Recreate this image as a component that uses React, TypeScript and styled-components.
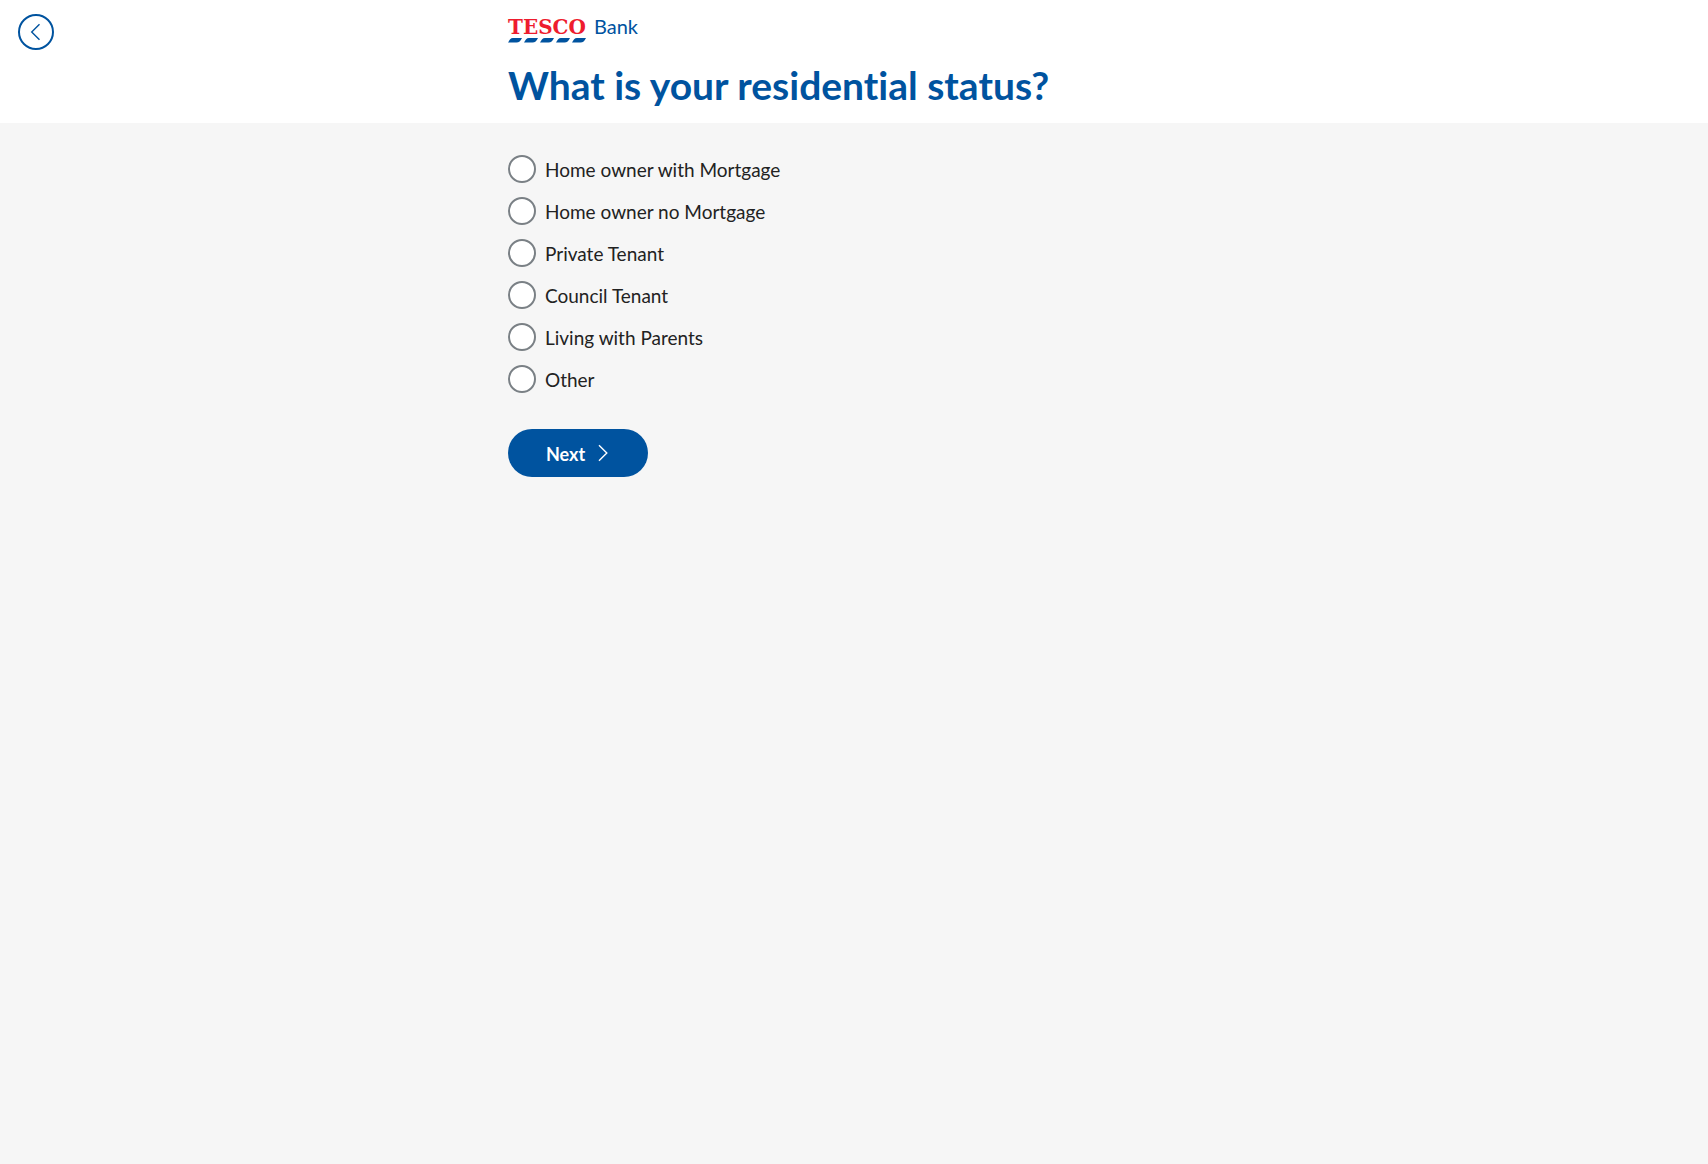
import { useState } from "react";
import type { FormEvent } from "react";
import styled, { createGlobalStyle } from "styled-components";

const brandBlue = "#00539f";
const brandRed = "#ee1c2e";

const GlobalStyle = createGlobalStyle`
  *, *::before, *::after {
    box-sizing: border-box;
  }
  body {
    margin: 0;
    min-height: 100vh;
    background: #f6f6f6;
    color: #222;
    font-family: Lato, "Liberation Sans", sans-serif;
    font-size: 19px;
    font-variant-ligatures: none;
    line-height: 28px;
  }
`;

const Header = styled.header`
  display: grid;
  grid-template-columns: minmax(60px, 1fr) minmax(0, 692px) minmax(18px, 1fr);
  padding: 14px 0;
  background: #fff;
`;

const BackButton = styled.button`
  display: flex;
  align-items: center;
  justify-content: center;
  width: 36px;
  height: 36px;
  margin-left: 18px;
  padding: 0;
  border: 2px solid ${brandBlue};
  border-radius: 50%;
  background: #fff;
  color: ${brandBlue};
  cursor: pointer;
`;

const Logo = styled.a`
  display: flex;
  align-items: flex-start;
  gap: 8px;
  width: fit-content;
  height: 28px;
  color: ${brandBlue};
  text-decoration: none;
`;

const Tesco = styled.span`
  display: flex;
  flex-direction: column;
  padding-top: 2px;
`;

const TescoName = styled.span`
  color: ${brandRed};
  font: bold 20px/22px "DejaVu Serif", serif;
`;

const BankName = styled.span`
  font-size: 20px;
  line-height: 24px;
`;

const Title = styled.h1`
  margin: 19px 0 0;
  color: ${brandBlue};
  font-size: 39px;
  font-weight: 700;
  line-height: 48px;
`;

const Main = styled.main`
  display: grid;
  grid-template-columns: minmax(18px, 1fr) minmax(0, 692px) minmax(18px, 1fr);
  padding: 32px 0;
`;

const Form = styled.form`
  grid-column: 2;
`;

const Options = styled.fieldset`
  display: flex;
  flex-direction: column;
  align-items: flex-start;
  gap: 14px;
  margin: 0;
  padding: 0;
  border: 0;
`;

const Option = styled.label`
  display: flex;
  align-items: center;
  gap: 9px;
  cursor: pointer;
`;

const ControlText = styled.span`
  padding-top: 2px;
  line-height: 26px;
`;

const Radio = styled.input`
  appearance: none;
  flex: none;
  width: 28px;
  height: 28px;
  margin: 0;
  border: 2px solid #7a8085;
  border-radius: 50%;
  background: #fff;
  cursor: pointer;

  &:checked {
    border: 8px solid ${brandBlue};
  }
`;

const NextButton = styled.button`
  display: flex;
  align-items: center;
  gap: 12px;
  height: 48px;
  margin-top: 36px;
  padding: 0 39px 0 38px;
  border: 0;
  border-radius: 24px;
  background: ${brandBlue};
  color: #fff;
  font: inherit;
  font-size: 18px;
  font-weight: 700;
  cursor: pointer;
`;

const choices = [
  "Home owner with Mortgage",
  "Home owner no Mortgage",
  "Private Tenant",
  "Council Tenant",
  "Living with Parents",
  "Other",
];

function Chevron({ direction }: { direction: "left" | "right" }) {
  return (
    <svg width="12" height="18" viewBox="0 0 12 18" fill="none" stroke="currentColor" strokeWidth="1.4" aria-hidden="true">
      <path d={direction === "left" ? "M9.5 1.2 1.7 9l7.8 7.8" : "M2 1.2 9.8 9 2 16.8"} />
    </svg>
  );
}

function Stripes() {
  return (
    <svg width="78" height="5" viewBox="0 0 78 5" fill={brandBlue} aria-hidden="true">
      {[0, 16, 32, 48, 64].map((x) => (
        <path key={x} d={`M${x} 4.5C${x + 1.5} 2 ${x + 2.5} 0 ${x + 5} 0h9c-1.5 3-3 4.5-5.5 4.5Z`} />
      ))}
    </svg>
  );
}

export default function App() {
  const [status, setStatus] = useState("");

  return (
    <>
      <GlobalStyle />
      <Header>
        <BackButton type="button" aria-label="Back">
          <Chevron direction="left" />
        </BackButton>
        <div>
          <Logo href="#">
            <Tesco>
              <TescoName>TESCO</TescoName>
              <Stripes />
            </Tesco>
            <BankName>Bank</BankName>
          </Logo>
          <Title id="question">What is your residential status?</Title>
        </div>
      </Header>
      <Main>
        <Form onSubmit={(event: FormEvent) => event.preventDefault()}>
          <Options aria-labelledby="question">
            {choices.map((choice) => (
              <Option key={choice}>
                <Radio
                  type="radio"
                  name="status"
                  value={choice}
                  checked={status === choice}
                  onChange={() => setStatus(choice)}
                />
                <ControlText>{choice}</ControlText>
              </Option>
            ))}
          </Options>
          <NextButton type="submit">
            <ControlText>Next</ControlText>
            <Chevron direction="right" />
          </NextButton>
        </Form>
      </Main>
    </>
  );
}
